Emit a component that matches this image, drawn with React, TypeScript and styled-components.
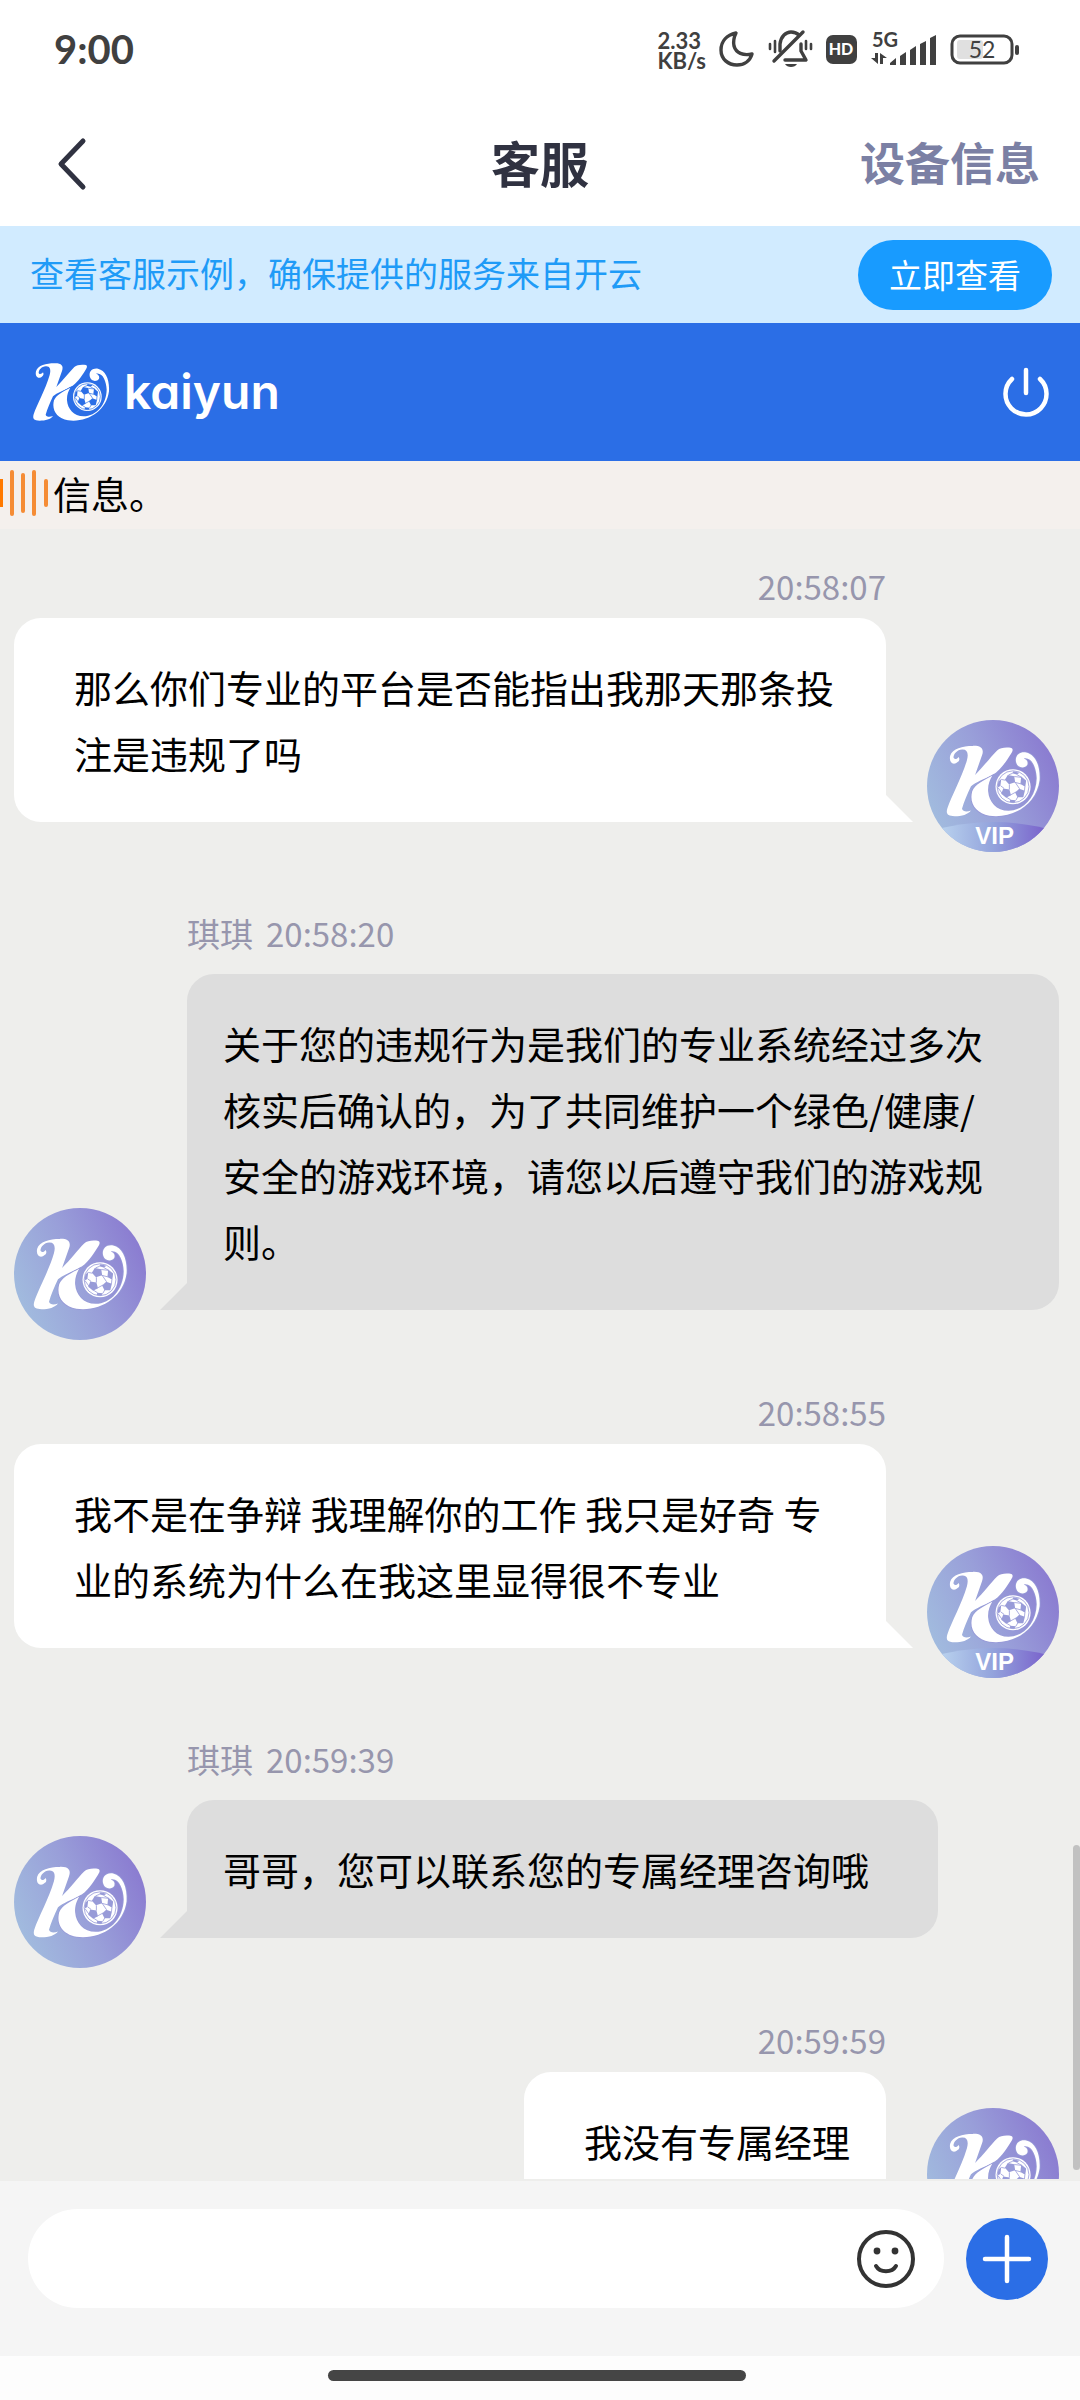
import React from "react";
import styled, { createGlobalStyle, css } from "styled-components";

const fontStack = `"Noto Sans CJK SC", sans-serif`;
const brandBlue = "#2b6ee6";

const GlobalStyle = createGlobalStyle`
  *, *::before, *::after { box-sizing: border-box; }
  body { margin: 0; font-family: ${fontStack}; background: #fff; }
  button, input { font-family: inherit; border: 0; padding: 0; background: none; }
  button { cursor: pointer; }
`;

const Screen = styled.div`
  display: flex;
  flex-direction: column;
  height: 100vh;
  overflow: hidden;
`;

const StatusBar = styled.div`
  flex: none;
  display: flex;
  align-items: center;
  justify-content: space-between;
  height: 98px;
  padding: 0 60px 0 54px;
  color: #404040;
`;

const Clock = styled.time`
  font: 700 40px/50px Lato, sans-serif;
`;

const StatusIcons = styled.div`
  display: flex;
  align-items: center;
  gap: 13px;
`;

const NetSpeed = styled.div`
  display: flex;
  flex-direction: column;
  padding-top: 4px;
  font: 700 22px/20px Lato, sans-serif;
`;

const Header = styled.header`
  flex: none;
  display: grid;
  grid-template-columns: 1fr auto 1fr;
  align-items: center;
  height: 128px;
  padding: 0 40px;
`;

const BackButton = styled.button`
  justify-self: start;
  display: flex;
  padding: 4px 14px 0;
`;

const Title = styled.h1`
  margin: 0;
  font-size: 49px;
  line-height: 64px;
  font-weight: 700;
  color: #303241;
`;

const DeviceLink = styled.a`
  justify-self: end;
  font-size: 45px;
  line-height: 64px;
  font-weight: 700;
  color: #7b80a4;
  text-decoration: none;
`;

const Banner = styled.section`
  flex: none;
  display: flex;
  align-items: center;
  justify-content: space-between;
  height: 97px;
  padding: 0 28px 0 30px;
  background: #d1ebff;
  color: #1f9bf7;
`;

const BannerText = styled.p`
  margin: 0;
  padding-bottom: 3px;
  font-size: 34px;
  line-height: 50px;
`;

const BannerButton = styled.button`
  height: 70px;
  padding: 0 31px 2px;
  border-radius: 35px;
  background: #189bff;
  color: #fff;
  font-size: 33px;
`;

const BrandBar = styled.div`
  flex: none;
  display: flex;
  align-items: center;
  justify-content: space-between;
  height: 138px;
  padding: 0 30px 0 32px;
  background: ${brandBlue};
  color: #fff;
`;

const Brand = styled.div`
  display: flex;
  align-items: center;
  gap: 14px;
  font: 600 48px/60px Inter, sans-serif;
  font-feature-settings: "cv11";
`;

const PowerButton = styled.button`
  display: flex;
  color: #fff;
`;

const Notice = styled.div`
  flex: none;
  display: flex;
  align-items: center;
  gap: 5px;
  height: 68px;
  padding-bottom: 4px;
  background: #f4f0ed;
  font-size: 38px;
  line-height: 64px;
  color: #000;
`;

const ChatArea = styled.main`
  position: relative;
  flex: 1;
  min-height: 0;
  overflow: hidden;
  display: flex;
  flex-direction: column;
  gap: 48px;
  padding: 33px 21px 0 14px;
  background: #eeeeec;
  border-bottom: 2px solid #eeeeec;
`;

const ScrollThumb = styled.div`
  position: absolute;
  right: 0;
  bottom: 9px;
  width: 7px;
  height: 325px;
  border-radius: 4px;
  background: #c1c1c1;
`;

const Row = styled.article<{ $own: boolean }>`
  flex: none;
  display: flex;
  flex-direction: ${(p) => (p.$own ? "row-reverse" : "row")};
  align-items: flex-end;
  gap: 41px;
`;

const Column = styled.div<{ $own: boolean }>`
  display: flex;
  flex-direction: column;
  align-items: ${(p) => (p.$own ? "flex-end" : "flex-start")};
  flex: 1;
  min-width: 0;
  padding-bottom: 30px;
`;

const Meta = styled.div<{ $own: boolean }>`
  display: flex;
  gap: 13px;
  margin-bottom: 8px;
  font-size: 33px;
  line-height: ${(p) => (p.$own ? 48 : 66)}px;
  color: #9796ad;
`;

const ownBubble = css`
  padding: 36px 36px 36px 60px;
  border-radius: 27px 27px 0 27px;
  background: #fff;
  &::after {
    left: 100%;
    background: #fff;
    clip-path: polygon(0 0, 100% 100%, 0 100%);
  }
`;

const agentBubble = css`
  padding: 36px 60px 36px 36px;
  border-radius: 27px 27px 27px 0;
  background: #ddd;
  &::after {
    right: 100%;
    background: #ddd;
    clip-path: polygon(100% 0, 100% 100%, 0 100%);
  }
`;

const Bubble = styled.p<{ $own: boolean }>`
  position: relative;
  margin: 0;
  font-size: 38px;
  line-height: 66px;
  color: #000;
  &::after {
    content: "";
    position: absolute;
    bottom: 0;
    width: 27px;
    height: 27px;
  }
  ${(p) => (p.$own ? ownBubble : agentBubble)}
`;

const AvatarSvg = styled.svg`
  flex: none;
  width: 132px;
  height: 132px;
`;

const Composer = styled.form`
  flex: none;
  display: flex;
  align-items: center;
  gap: 22px;
  padding: 28px 32px 48px 28px;
  background: #f5f5f5;
`;

const InputPill = styled.label`
  flex: 1;
  display: flex;
  align-items: center;
  height: 99px;
  padding: 0 28px 0 40px;
  border-radius: 50px;
  background: #fff;
`;

const TextInput = styled.input`
  flex: 1;
  min-width: 0;
  height: 66px;
  font-size: 38px;
  outline: none;
`;

const EmojiButton = styled.button`
  display: flex;
`;

const AddButton = styled.button`
  display: flex;
  align-items: center;
  justify-content: center;
  width: 82px;
  height: 82px;
  border-radius: 50%;
  background: ${brandBlue};
`;

const GestureArea = styled.div`
  flex: none;
  display: flex;
  justify-content: center;
  height: 44px;
  padding: 14px 6px 0 0;
  background: #fdfdfd;
`;

const GestureBar = styled.div`
  width: 418px;
  height: 11px;
  border-radius: 6px;
  background: #454545;
`;

/* The emblem: a swash K whose tail wraps round a football. */
function Emblem({ hole }: { hole: string }) {
  return (
    <g>
      <path
        fill="#fff"
        d="M128 140 C118 150 105 143 109 125 C114 107 140 101 164 101 C184 100 193 108 187 124 L170 172 C190 152 208 128 224 112 C232 105 246 104 259 106 C264 109 262 114 258 120 C243 144 232 160 212 173 C192 182 172 190 160 200 C151 219 143 238 138 255 C140 262 150 263 160 259 C152 269 138 273 120 273 C103 273 98 268 102 254 C112 224 138 178 150 136 C155 118 150 109 138 110 C126 111 118 120 117 129 C119 136 126 133 130 128 C133 134 131 138 128 140 Z"
      />
      <path
        fill="#fff"
        stroke={hole}
        strokeWidth="4"
        paintOrder="stroke"
        d="M212 174 C190 186 170 195 163 212 C155 242 172 266 205 272 C262 280 320 245 328 185 C330 150 318 122 295 117 C276 114 266 128 271 143 C275 156 292 157 298 147 C300 140 297 134 289 132 C309 127 320 155 321 180 C320 225 290 259 252 260 C222 260 204 238 202 212 C201 196 206 184 212 174 Z"
      />
      <circle cx="263" cy="201" r="43" fill="#fff" />
      <circle cx="263" cy="201" r="39" fill="none" stroke={hole} strokeWidth="2" />
      <g fill={hole}>
        <path d="M250 172 L266 175 L268 190 L253 195 L243 184 Z" />
        <path d="M283 176 L295 186 L293 201 L281 194 Z" />
        <path d="M278 206 L292 211 L288 227 L274 227 L268 215 Z" />
        <path d="M239 205 L254 208 L258 222 L246 228 L234 218 Z" />
        <path d="M227 188 L234 182 L232 199 L225 203 Z" />
        <path d="M264 163 L279 167 L272 171 L261 168 Z" />
        <path d="M256 233 L270 234 L266 240 L255 239 Z" />
      </g>
      <path
        d="M266 176 L284 178 M268 190 L279 206 M254 195 L254 208 M244 185 L234 183 M252 172 L262 168 M272 171 L284 178 M257 221 L270 214 M282 194 L267 190 M291 211 L292 200 M236 217 L226 203 M246 226 L257 233 M275 225 L270 234 M241 205 L233 199"
        stroke={hole}
        strokeWidth="2"
        fill="none"
      />
    </g>
  );
}

function Avatar({ vip, id }: { vip: boolean; id: string }) {
  return (
    <AvatarSvg viewBox="0 0 396 396" role="img" aria-label={vip ? "VIP" : "kaiyun"}>
      <defs>
        <linearGradient id={`${id}-disc`} x1="0.05" y1="0.7" x2="0.95" y2="0.3">
          <stop offset="0" stopColor="#a1bade" />
          <stop offset="0.5" stopColor="#999fd9" />
          <stop offset="1" stopColor="#8b7dd1" />
        </linearGradient>
        <linearGradient id={`${id}-band`} x1="0.1" y1="0" x2="0.9" y2="0">
          <stop offset="0" stopColor="#b9d2ee" />
          <stop offset="0.5" stopColor="#93a3dc" />
          <stop offset="1" stopColor="#7a62cc" />
        </linearGradient>
        <clipPath id={`${id}-clip`}>
          <circle cx="198" cy="198" r="198" />
        </clipPath>
      </defs>
      <g clipPath={`url(#${id}-clip)`}>
        <rect width="396" height="396" fill={`url(#${id}-disc)`} />
        <g transform={vip ? "translate(-64 -46) scale(1.225)" : "translate(-64 -31) scale(1.225)"}>
          <Emblem hole="#989bd8" />
        </g>
        {vip && (
          <>
            <path d="M0 336 Q198 276 396 336 V396 H0 Z" fill={`url(#${id}-band)`} />
            <text
              x="203"
              y="372"
              fill="#fff"
              fontFamily="Liberation Sans, sans-serif"
              fontWeight="700"
              fontSize="72"
              textAnchor="middle"
            >
              VIP
            </text>
          </>
        )}
      </g>
    </AvatarSvg>
  );
}

type Message = { own: boolean; name?: string; time: string; text: string };

const messages: Message[] = [
  { own: true, time: "20:58:07", text: "那么你们专业的平台是否能指出我那天那条投注是违规了吗" },
  {
    own: false,
    name: "琪琪",
    time: "20:58:20",
    text: "关于您的违规行为是我们的专业系统经过多次核实后确认的，为了共同维护一个绿色/健康/安全的游戏环境，请您以后遵守我们的游戏规则。",
  },
  {
    own: true,
    time: "20:58:55",
    text: "我不是在争辩 我理解你的工作 我只是好奇 专业的系统为什么在我这里显得很不专业",
  },
  { own: false, name: "琪琪", time: "20:59:39", text: "哥哥，您可以联系您的专属经理咨询哦\u00a0" },
  { own: true, time: "20:59:59", text: "我没有专属经理" },
];

function ChatMessage({ message, id }: { message: Message; id: string }) {
  const { own, name, time, text } = message;
  return (
    <Row $own={own}>
      <Avatar vip={own} id={id} />
      <Column $own={own}>
        <Meta $own={own}>
          {name && <span>{name}</span>}
          <time>{time}</time>
        </Meta>
        <Bubble $own={own}>{text}</Bubble>
      </Column>
    </Row>
  );
}

function MoonIcon() {
  return (
    <svg width="36" height="38" viewBox="0 0 36 38" fill="none" stroke="#404040" strokeWidth="3.4" strokeLinejoin="round">
      <path d="M17 3 C8 5 2 11 2 20 C2 29 9 35 18 35 C25 35 31 31 33 24 C24 26 17 23 15 16 C14 11 15 7 17 3 Z" />
    </svg>
  );
}

function MutedBellIcon() {
  return (
    <svg width="45" height="40" viewBox="0 0 45 40" fill="none" stroke="#404040" strokeWidth="3.4" strokeLinecap="round">
      <path d="M12 22 V15 C13 7 18 3 23 3 C26 3 29 4 31 6" />
      <path d="M33 15 V22 L38 31 H17" strokeLinejoin="round" />
      <path d="M6 32 L35 3" />
      <path d="M2 15 V20 M7 12 V23 M38 12 V20 M43 15 V20" strokeWidth="2.6" />
      <path d="M17 35 H29 C27 39 19 39 17 35 Z" fill="#404040" stroke="none" />
    </svg>
  );
}

function HdIcon() {
  return (
    <svg width="31" height="29" viewBox="0 0 31 29">
      <rect x="0" y="0" width="31" height="29" rx="7" fill="#404040" />
      <text x="15" y="20" fontFamily="Lato, sans-serif" fontWeight="900" fontSize="16" fill="#fff" textAnchor="middle">
        HD
      </text>
    </svg>
  );
}

function SignalIcon() {
  return (
    <svg width="67" height="46" viewBox="0 -6 67 46" fill="#404040">
      <text x="2" y="15" fontFamily="Lato, sans-serif" fontWeight="700" fontSize="20">
        5G
      </text>
      <path d="M5 21 H8 V32 L1 26 H5 Z" />
      <path d="M10 32 H13 V26 H17 L10 21 Z" />
      <path d="M20 33 V31 L26 26 V33 Z M30 33 V24 L36 20 V33 Z M40 33 V18 L46 14 V33 Z M50 33 V12 L56 9 V33 Z M60 33 V6 L66 3 V33 Z" />
    </svg>
  );
}

function BatteryIcon() {
  return (
    <svg width="70" height="31" viewBox="0 0 70 31">
      <rect x="7" y="6" width="26" height="19" rx="3" fill="#e0e0e0" />
      <rect x="2" y="2" width="60" height="27" rx="8" fill="none" stroke="#404040" strokeWidth="3" />
      <rect x="65" y="11" width="4" height="10" rx="2" fill="#404040" />
      <text x="32" y="24" fontFamily="Lato, sans-serif" fontSize="23" fill="#404040" textAnchor="middle">
        52
      </text>
    </svg>
  );
}

export default function App() {
  return (
    <Screen>
      <GlobalStyle />
      <StatusBar>
        <Clock>9:00</Clock>
        <StatusIcons>
          <NetSpeed>
            <span>2.33</span>
            <span>KB/s</span>
          </NetSpeed>
          <MoonIcon />
          <MutedBellIcon />
          <HdIcon />
          <SignalIcon />
          <BatteryIcon />
        </StatusIcons>
      </StatusBar>
      <Header>
        <BackButton aria-label="返回">
          <svg width="36" height="54" viewBox="0 0 36 54" fill="none" stroke="#303241" strokeWidth="5" strokeLinecap="round" strokeLinejoin="round">
            <path d="M29 4 L7 27 L29 50" />
          </svg>
        </BackButton>
        <Title>客服</Title>
        <DeviceLink href="#device">设备信息</DeviceLink>
      </Header>
      <Banner>
        <BannerText>查看客服示例，确保提供的服务来自开云</BannerText>
        <BannerButton>立即查看</BannerButton>
      </Banner>
      <BrandBar>
        <Brand>
          <svg width="78" height="60" viewBox="97 97 234 180" aria-hidden="true">
            <Emblem hole={brandBlue} />
          </svg>
          <span>kaiyun</span>
        </Brand>
        <PowerButton aria-label="退出">
          <svg width="48" height="52" viewBox="0 0 48 52" fill="none" stroke="#fff" strokeWidth="4.5" strokeLinecap="round">
            <path d="M10 13 A20.5 20.5 0 1 0 38 13" />
            <path d="M24 4 V27" />
          </svg>
        </PowerButton>
      </BrandBar>
      <Notice>
        <svg width="48" height="48" viewBox="0 0 48 48" fill="#f58c35" aria-hidden="true">
          <rect x="0" y="10" width="3" height="28" fill="#ff7a00" />
          <rect x="10" y="1" width="4" height="46" rx="2" />
          <rect x="21" y="4" width="4" height="40" rx="2" />
          <rect x="32" y="1" width="4" height="46" rx="2" />
          <rect x="44" y="10" width="4" height="28" rx="2" />
        </svg>
        <span>信息。</span>
      </Notice>
      <ChatArea>
        {messages.map((m, i) => (
          <ChatMessage key={m.time} message={m} id={`avatar${i}`} />
        ))}
        <ScrollThumb />
      </ChatArea>
      <Composer onSubmit={(e) => e.preventDefault()}>
        <InputPill>
          <TextInput type="text" aria-label="输入消息" />
          <EmojiButton type="button" aria-label="表情">
            <svg width="60" height="60" viewBox="0 0 60 60" fill="none" stroke="#333" strokeWidth="4" strokeLinecap="round">
              <circle cx="30" cy="30" r="27" />
              <path d="M20 37 C24 44 36 44 40 37" />
              <circle cx="21" cy="22" r="3.4" fill="#333" stroke="none" />
              <circle cx="39" cy="22" r="3.4" fill="#333" stroke="none" />
            </svg>
          </EmojiButton>
        </InputPill>
        <AddButton type="button" aria-label="更多">
          <svg width="50" height="50" viewBox="0 0 50 50" stroke="#fff" strokeWidth="4.5" strokeLinecap="round">
            <path d="M25 3 V47 M3 25 H47" />
          </svg>
        </AddButton>
      </Composer>
      <GestureArea>
        <GestureBar />
      </GestureArea>
    </Screen>
  );
}
